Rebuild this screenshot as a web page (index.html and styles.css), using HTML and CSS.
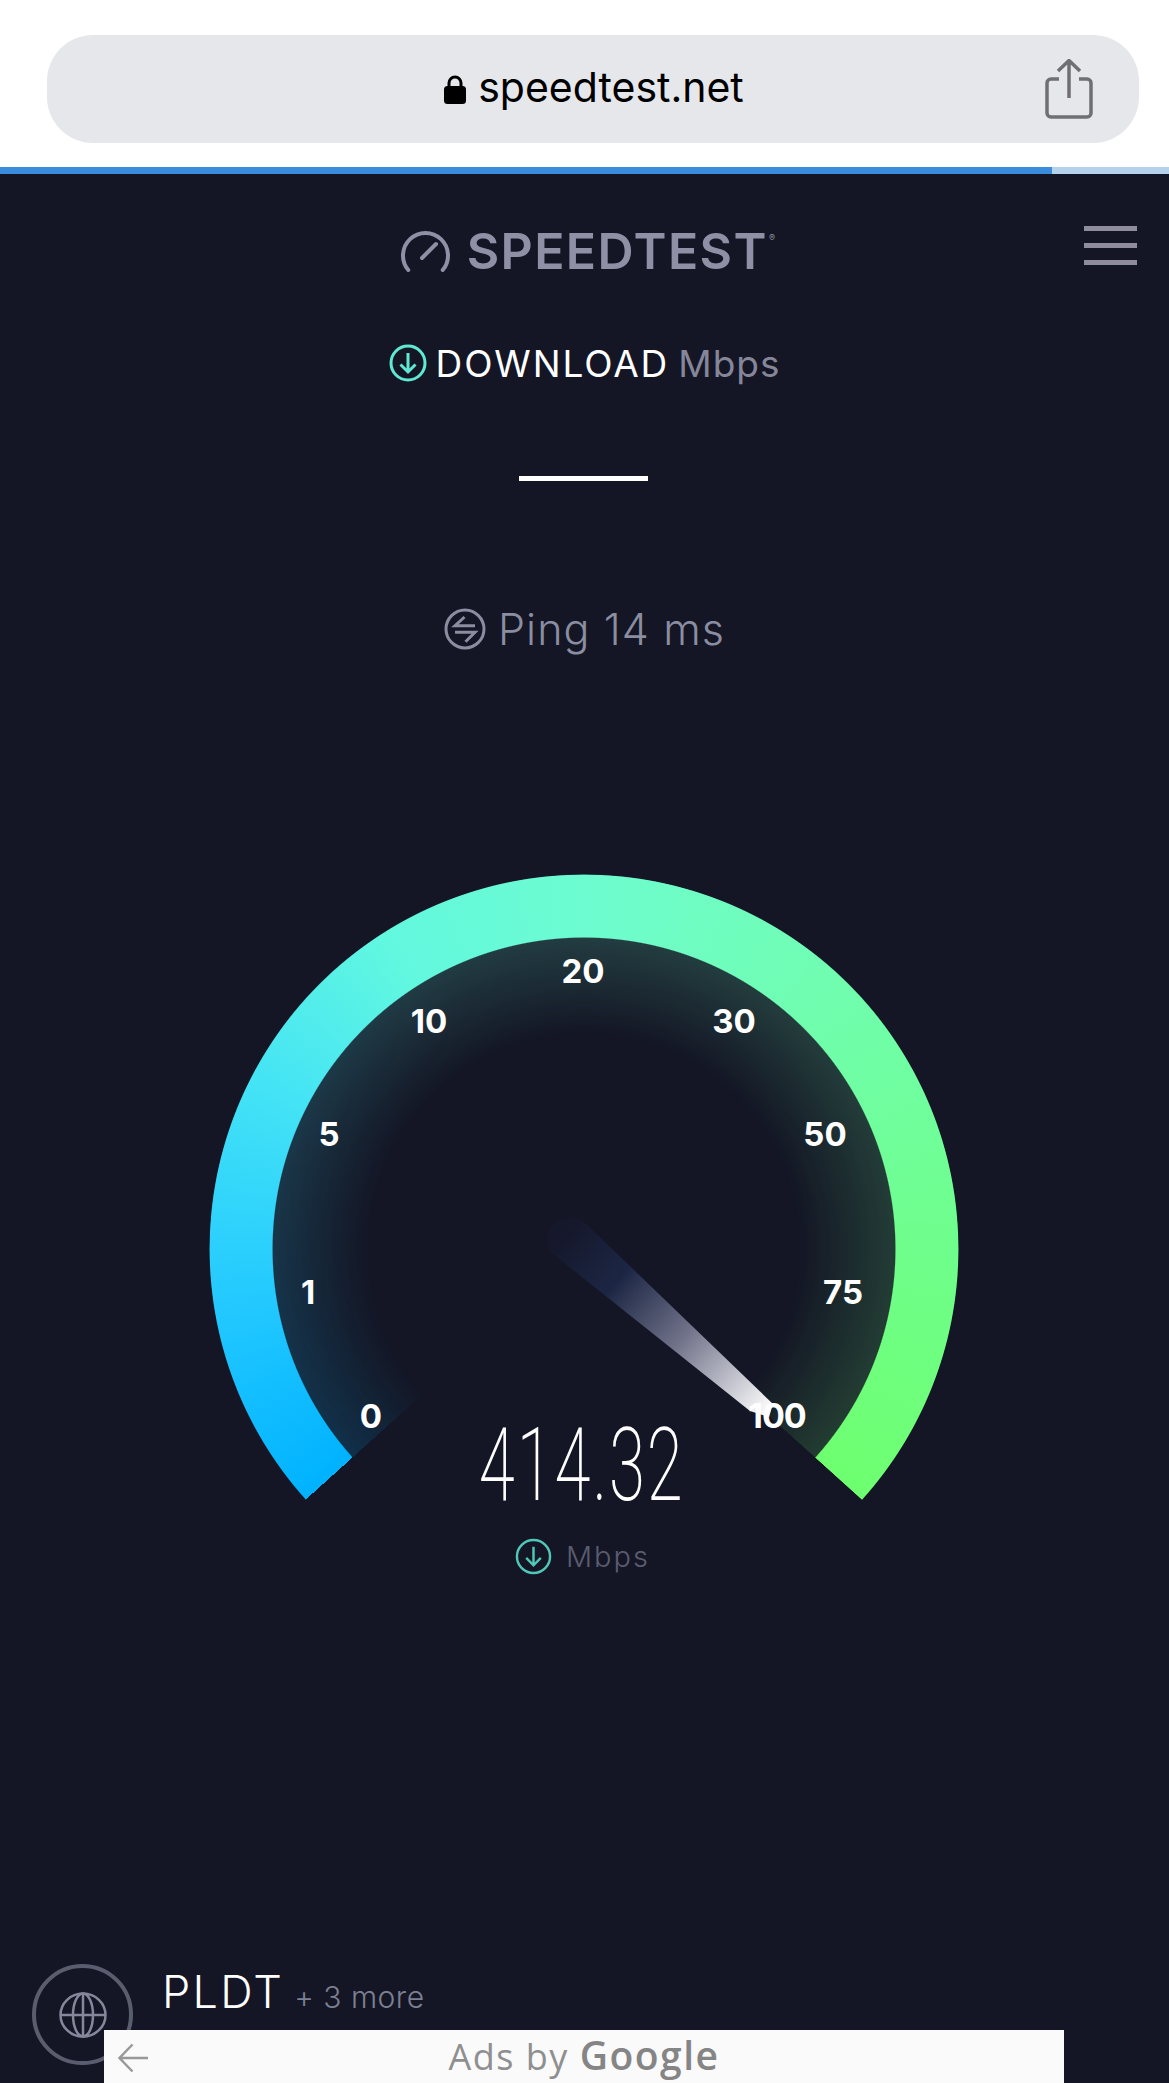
FILE: index.html
```html
<!DOCTYPE html>
<html lang="en">
<head>
  <meta charset="UTF-8" />
  <meta name="viewport" content="width=device-width, initial-scale=1.0" />
  <title>Speedtest</title>
  <link rel="stylesheet" href="styles.css">
</head>
<body>
  <header class="safari">
    <div class="urlbar">
      <div class="address">
        <svg class="lock" viewBox="0 0 22 29"><path d="M5 13V8a6 6 0 0 1 12 0v5" fill="none" stroke="#000" stroke-width="3"/><rect x="0" y="11" width="22" height="18" rx="3.5" fill="#000"/></svg>
        <span>speedtest.net</span>
      </div>
      <svg class="share" viewBox="0 0 48 60" fill="none" stroke="#6f6f74" stroke-width="3.500"><path d="M14 20H6a4 4 0 0 0-4 4v30a4 4 0 0 0 4 4h36a4 4 0 0 0 4-4V24a4 4 0 0 0-4-4h-8"/><path d="M24 39V2M13 12 24 1.500 35 12"/></svg>
    </div>
  </header>
  <div class="progress"><div class="progress-fill"></div></div>

  <main class="app">
    <div class="topbar">
      <div class="brand">
        <svg class="brand-icon" viewBox="0 0 52 42" fill="none" stroke="#8f90a6" stroke-width="4" stroke-linecap="round"><path d="M8.300 40A22.500 22.500 0 1 1 42.700 40"/><path d="M22 28 36 14"/></svg>
        <span>SPEEDTEST</span><sup>®</sup>
      </div>
      <div class="menu"><i></i><i></i><i></i></div>
    </div>

    <div class="dl-row">
      <svg class="dl-icon" viewBox="0 0 38 38" fill="none" stroke="#5fe8d2" stroke-width="3"><circle cx="19" cy="19" r="17"/><path d="M19 9v19M11.500 20.500 19 28l7.500-7.500"/></svg>
      <span class="dl-word">DOWNLOAD</span>
      <span class="dl-unit">Mbps</span>
    </div>
    <div class="dash"></div>

    <div class="ping">
      <svg class="ping-icon" viewBox="0 0 42 42" fill="none" stroke="#8b8da0" stroke-width="3"><circle cx="21" cy="21" r="19"/><path d="M20.500 9 11 17.700H31M11 24.300H31L21.500 33.700"/></svg>
      <span>Ping 14 ms</span>
    </div>

    <section class="dial">
      <div class="dial-glow"></div>
      <div class="dial-arc"></div>
      <span class="tick t0">0</span>
      <span class="tick t1">1</span>
      <span class="tick t5">5</span>
      <span class="tick t10">10</span>
      <span class="tick t20">20</span>
      <span class="tick t30">30</span>
      <span class="tick t50">50</span>
      <span class="tick t75">75</span>
      <svg class="needle" viewBox="0 0 750 750">
        <defs>
          <linearGradient id="needle-fade" gradientUnits="userSpaceOnUse" x1="350" y1="360" x2="552" y2="535">
            <stop offset="0" stop-color="#15172a"/>
            <stop offset=".28" stop-color="#1c2644"/>
            <stop offset=".6" stop-color="#6f7188"/>
            <stop offset="1" stop-color="#f4f4f6"/>
          </linearGradient>
        </defs>
        <path d="M371 344 564 530 560 543 541 537 344 380Q335 370 338 360 345 342 371 344Z" fill="url(#needle-fade)"/>
      </svg>
      <span class="tick t100">100</span>
      <div class="readout">
        <div class="value">414.32</div>
        <div class="value-unit">
          <svg class="unit-icon" viewBox="0 0 38 38" fill="none" stroke="#4fc8b8" stroke-width="2.500"><circle cx="19" cy="19" r="17"/><path d="M19 9v19M11.500 20.500 19 28l7.500-7.500"/></svg>
          <span>Mbps</span>
        </div>
      </div>
    </section>

    <div class="isp">
      <div class="isp-ring">
        <svg class="globe" viewBox="0 0 48 46" fill="none" stroke="#85879a" stroke-width="2.500"><ellipse cx="24" cy="23" rx="22.500" ry="21.500"/><ellipse cx="24" cy="23" rx="10" ry="21.500"/><path d="M24 1v44M1.500 23h45" /></svg>
      </div>
      <div class="isp-name">PLDT <small>+ 3 more</small></div>
    </div>

    <aside class="ad">
      <svg class="ad-back" viewBox="0 0 30 30" fill="none" stroke="#999" stroke-width="2.500"><path d="M14.500 1.500 1.500 15l13 13.500M2 15h28"/></svg>
      <div class="ad-label">Ads by <b>Google</b></div>
    </aside>
  </main>
</body>
</html>
```

FILE: styles.css
```css
body {
  margin: 0;
  height: 2083px;
  overflow: hidden;
  background: #fff;
  font-family: Inter, "Liberation Sans", sans-serif;
}

/* browser chrome */
.safari {
  height: 167px;
  padding: 35px 30px 0 47px;
  box-sizing: border-box;
}
.urlbar {
  position: relative;
  height: 108px;
  border-radius: 46px;
  background: #e6e7ea;
  display: flex;
  align-items: center;
  justify-content: center;
}
.address {
  display: flex;
  align-items: center;
  gap: 12px;
  margin: -5px 0 0 2px;
  font-size: 41px;
  color: #000;
}
.lock {
  width: 22px;
  height: 29px;
  margin-top: 6px;
}
.share {
  position: absolute;
  right: 46px;
  top: 24px;
  width: 48px;
  height: 60px;
}
.progress {
  height: 7px;
  background: #b4d2ec;
}
.progress-fill {
  width: 90%;
  height: 100%;
  background: #3a8ddc;
}

/* page */
.app {
  position: relative;
  height: 1909px;
  overflow: hidden;
  background: #141625;
  display: flex;
  flex-direction: column;
}
.topbar {
  display: grid;
  grid-template-columns: 1fr auto 1fr;
  padding-top: 52px;
  height: 48px;
}
.brand {
  grid-column: 2;
  display: flex;
  align-items: center;
  height: 46px;
  margin: 2px 0 0 7px;
  color: #8f90a6;
  font-size: 50px;
  font-weight: 600;
  letter-spacing: 1.400px;
}
.brand-icon {
  width: 52px;
  height: 42px;
  margin-right: 15px;
}
.brand sup {
  font-size: 9px;
  font-weight: 400;
  align-self: flex-start;
  margin: 4px 0 0 1px;
}
.menu {
  justify-self: end;
  grid-column: 3;
  width: 53px;
  margin-right: 32px;
  display: flex;
  flex-direction: column;
  gap: 12px;
}
.menu i {
  height: 5px;
  background: #8d8d9e;
}
.dl-row {
  margin-top: 70px;
  height: 38px;
  display: flex;
  align-items: center;
  justify-content: center;
  font-size: 37px;
}
.dl-icon {
  width: 38px;
  height: 38px;
  margin-right: 9px;
}
.dl-word {
  color: #fff;
  letter-spacing: 1.900px;
}
.dl-unit {
  margin-left: 9px;
  color: #85869a;
  letter-spacing: 1px;
}
.dash {
  width: 129px;
  height: 5px;
  margin: 94px 0 0 519px;
  background: #fff;
}
.ping {
  margin-top: 127px;
  height: 42px;
  display: flex;
  align-items: center;
  justify-content: center;
  gap: 12px;
  font-size: 43px;
  font-weight: 300;
  letter-spacing: 1.100px;
  color: #8b8da0;
}
.ping-icon {
  width: 42px;
  height: 42px;
}

/* gauge, everything inside is placed on the dial */
.dial {
  position: relative;
  flex: none;
  width: 750px;
  height: 750px;
  margin: 224px 0 0 209px;
}
.dial-arc, .dial-glow {
  position: absolute;
  inset: 0;
  border-radius: 50%;
  background: conic-gradient(from 228deg, #00b2ff 0deg, #22c8ff 32deg, #45e4f5 70deg, #62f8df 100deg, #6dfcd0 132deg, #70fdb4 170deg, #6ffe90 215deg, #6eff70 264deg, transparent 264.100deg);
}
.dial-arc {
  -webkit-mask-image: radial-gradient(circle closest-side, transparent 82.900%, #000 83.200%, #000 99.700%, transparent 100%);
  mask-image: radial-gradient(circle closest-side, transparent 82.900%, #000 83.200%, #000 99.700%, transparent 100%);
}
.dial-glow {
  -webkit-mask-image: radial-gradient(circle closest-side, transparent 57%, rgba(0,0,0,.17) 83.200%, transparent 83.300%);
  mask-image: radial-gradient(circle closest-side, transparent 57%, rgba(0,0,0,.17) 83.200%, transparent 83.300%);
}
.tick {
  position: absolute;
  transform: translate(-50%, -50%);
  color: #fff;
  font-size: 33px;
  font-weight: 700;
  line-height: 1;
}
.t0 { left: 162px; top: 542px; }
.t1 { left: 99px; top: 418px; }
.t5 { left: 120px; top: 260px; }
.t10 { left: 220px; top: 147px; }
.t20 { left: 374px; top: 97px; }
.t30 { left: 525px; top: 147px; }
.t50 { left: 616px; top: 260px; }
.t75 { left: 634px; top: 418px; }
.t100 { left: 568px; top: 542px; letter-spacing: -1px; font-size: 34px; }
.needle {
  position: absolute;
  inset: 0;
  width: 750px;
  height: 750px;
}
.readout {
  position: absolute;
  left: 0;
  right: 0;
  top: 531px;
  display: flex;
  flex-direction: column;
  align-items: center;
}
.value {
  font-family: Roboto, Inter, sans-serif;
  font-size: 102px;
  font-weight: 200;
  letter-spacing: 3px;
  line-height: 120px;
  color: #fff;
  transform: scaleX(.64);
  margin-left: -4px;
}
.value-unit {
  margin-top: 13px;
  margin-left: -3px;
  display: flex;
  align-items: center;
  gap: 14px;
  font-size: 29px;
  font-weight: 300;
  letter-spacing: 2px;
  color: #5a5d70;
}
.unit-icon {
  width: 37px;
  height: 37px;
}

/* isp row and the ad over it */
.isp {
  margin: 340px 0 0 32px;
  display: flex;
}
.isp-ring {
  width: 101px;
  height: 101px;
  box-sizing: border-box;
  flex: none;
  border: 4px solid #5a5d6e;
  border-radius: 50%;
  display: flex;
  align-items: center;
  justify-content: center;
}
.globe {
  width: 48px;
  height: 46px;
}
.isp-name {
  margin: 2px 0 0 29px;
  color: #fff;
  font-size: 45px;
  font-weight: 300;
  letter-spacing: 2.300px;
  line-height: 52px;
}
.isp-name small {
  font-size: 30px;
  letter-spacing: .5px;
  color: #7d8092;
  margin-left: -5px;
}
.ad {
  position: absolute;
  left: 104px;
  right: 105px;
  bottom: 0;
  height: 53px;
  background: #fafafa;
  display: flex;
  justify-content: center;
}
.ad-back {
  position: absolute;
  left: 14px;
  top: 13px;
  width: 30px;
  height: 30px;
}
.ad-label {
  font-family: "Open Sans", sans-serif;
  font-size: 36px;
  letter-spacing: 1.500px;
  line-height: 49px;
  color: #8f8f8f;
}
.ad-label b {
  font-weight: 600;
  font-size: 39px;
  color: #858585;
}
```
